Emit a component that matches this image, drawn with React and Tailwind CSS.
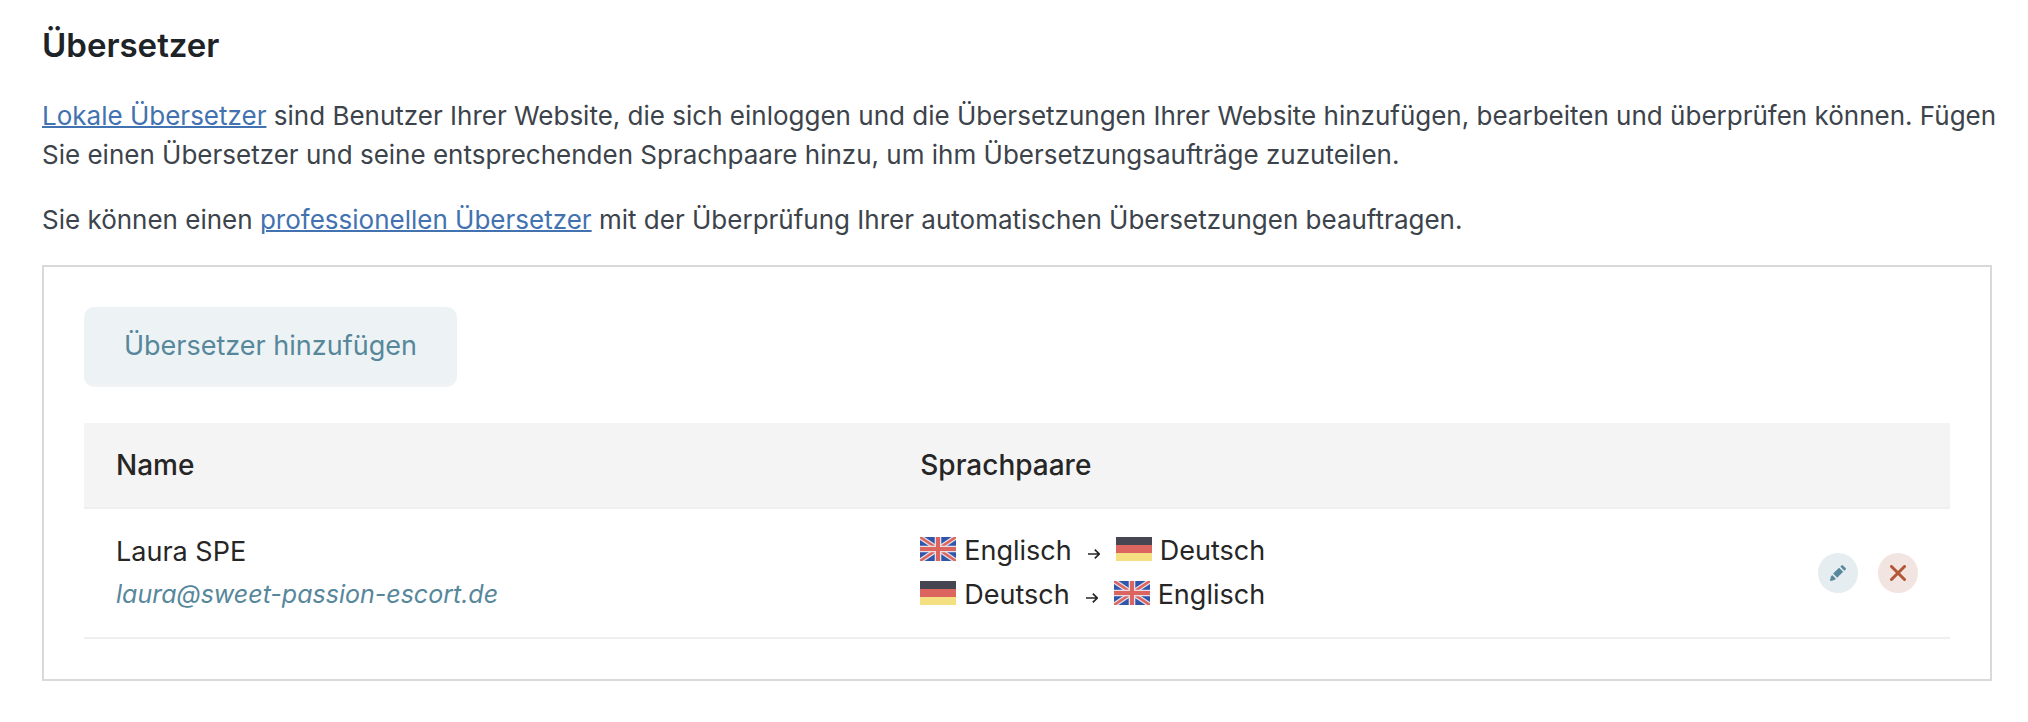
import React from 'react';

const translators = [
    {
        name: 'Laura SPE',
        email: 'laura@sweet-passion-escort.de',
        pairs: [
            ['en', 'de'],
            ['de', 'en'],
        ],
    },
];

const languages = {
    en: { label: 'Englisch', Flag: FlagGB },
    de: { label: 'Deutsch', Flag: FlagDE },
};

function FlagGB() {
    return (
        <svg viewBox="0 0 36 24" className="w-9 h-6 shrink-0" aria-hidden="true">
            <rect width="36" height="24" fill="#3056ac" />
            <path d="M0 0L36 24M36 0L0 24" stroke="#e6dfe6" strokeWidth="5" />
            <path d="M0 0L36 24M36 0L0 24" stroke="#dd6560" strokeWidth="2.6" />
            <path d="M18 0V24M0 12H36" stroke="#e6dfe6" strokeWidth="6.6" />
            <path d="M18 0V24M0 12H36" stroke="#dd6560" strokeWidth="4" />
        </svg>
    );
}

function FlagDE() {
    return (
        <svg viewBox="0 0 36 24" className="w-9 h-6 shrink-0" aria-hidden="true">
            <rect width="36" height="8" fill="#464653" />
            <rect y="8" width="36" height="8" fill="#dd6560" />
            <rect y="16" width="36" height="8" fill="#f5e081" />
        </svg>
    );
}

function Arrow() {
    return (
        <svg viewBox="0 0 12 12" className="w-3 h-3 mt-[11px] mx-4 shrink-0" fill="none" stroke="#262626" strokeWidth="1.7" aria-hidden="true">
            <path d="M0 6H11M6.8 1.6L11.2 6L6.8 10.4" />
        </svg>
    );
}

function Language({ code }) {
    const { label, Flag } = languages[code];

    return (
        <span className="flex items-start gap-2">
            <Flag />
            <span className="leading-7">{label}</span>
        </span>
    );
}

export default function App() {
    return (
        <div className="bg-white min-h-screen pl-[42px] pr-4 pt-6 pb-10 text-[26px] leading-[39px] text-[#3c434a]" style={{ fontFamily: 'Inter, "Liberation Sans", sans-serif' }}>
            <h3 className="text-[33px] leading-[42px] font-semibold text-[#1d2327]">Übersetzer</h3>

            <p className="mt-[30px]">
                <a href="#lokal" className="text-[#4272b0] underline decoration-2">Lokale Übersetzer</a> sind Benutzer Ihrer Website, die sich einloggen und die Übersetzungen Ihrer Website hinzufügen, bearbeiten und überprüfen können. Fügen Sie einen Übersetzer und seine entsprechenden Sprachpaare hinzu, um ihm Übersetzungsaufträge zuzuteilen.
            </p>
            <p className="mt-[26px]">
                Sie können einen <a href="#profi" className="text-[#4272b0] underline decoration-2">professionellen Übersetzer</a> mit der Überprüfung Ihrer automatischen Übersetzungen beauftragen.
            </p>

            {/* Translator box */}
            <div className="mt-[26px] mr-5 border-2 border-[#d9d9d9] p-10">
                <button type="button" className="block h-20 px-10 rounded-[10px] border-b-3 border-[#f1f3f4] bg-[#edf3f5] text-[27px] text-[#57879b]">
                    Übersetzer hinzufügen
                </button>

                <table className="mt-9 w-full border-separate border-spacing-0 text-left text-[27px] text-[#262626]">
                    <thead>
                        <tr className="bg-[#f4f4f4] text-[28px]">
                            <th className="w-[43.1%] px-8 h-[86px] font-medium border-b-2 border-[#efefef]">Name</th>
                            <th className="px-8 font-medium border-b-2 border-[#efefef]">Sprachpaare</th>
                            <td className="border-b-2 border-[#efefef]"></td>
                        </tr>
                    </thead>
                    <tbody>
                        {translators.map((translator) => (
                            <tr key={translator.email}>
                                <td className="px-8 py-[22px] align-top border-b-2 border-[#efefef]">
                                    <div className="leading-[42px]">{translator.name}</div>
                                    <a href={`mailto:${translator.email}`} className="block text-[25px] leading-[42px] italic text-[#57879b]">{translator.email}</a>
                                </td>
                                <td className="px-8 pt-7 align-top border-b-2 border-[#efefef]">
                                    {translator.pairs.map(([from, to]) => (
                                        <div key={from} className="flex items-start h-11">
                                            <Language code={from} />
                                            <Arrow />
                                            <Language code={to} />
                                        </div>
                                    ))}
                                </td>
                                <td className="px-8 border-b-2 border-[#efefef]">
                                    <div className="flex justify-end gap-5">
                                        <button type="button" aria-label="Bearbeiten" className="w-10 h-10 rounded-full bg-[#e5edf0] flex items-center justify-center">
                                            <svg viewBox="0 0 16 16" className="w-4 h-4" fill="#57879b" aria-hidden="true">
                                                <path d="M9.1 2.7L13.1 6.7L7.2 12.7L3.1 8.6Z" />
                                                <path d="M10.3 1.6L11.5 0.4Q12.2 -0.2 12.9 0.4L15.6 3.1Q16.2 3.8 15.6 4.5L14.3 5.7Z" />
                                                <path d="M2.2 10L5.9 13.7L4.4 15L0.7 16Q0 16 0 15.3L1 11.4Z" />
                                            </svg>
                                        </button>
                                        <button type="button" aria-label="Löschen" className="w-10 h-10 rounded-full bg-[#f2e4e1] flex items-center justify-center">
                                            <svg viewBox="0 0 16 16" className="w-4 h-4" fill="none" stroke="#b35635" strokeWidth="3" strokeLinecap="round" aria-hidden="true">
                                                <path d="M1.5 1.5L14.5 14.5M14.5 1.5L1.5 14.5" />
                                            </svg>
                                        </button>
                                    </div>
                                </td>
                            </tr>
                        ))}
                    </tbody>
                </table>
            </div>
        </div>
    );
}
